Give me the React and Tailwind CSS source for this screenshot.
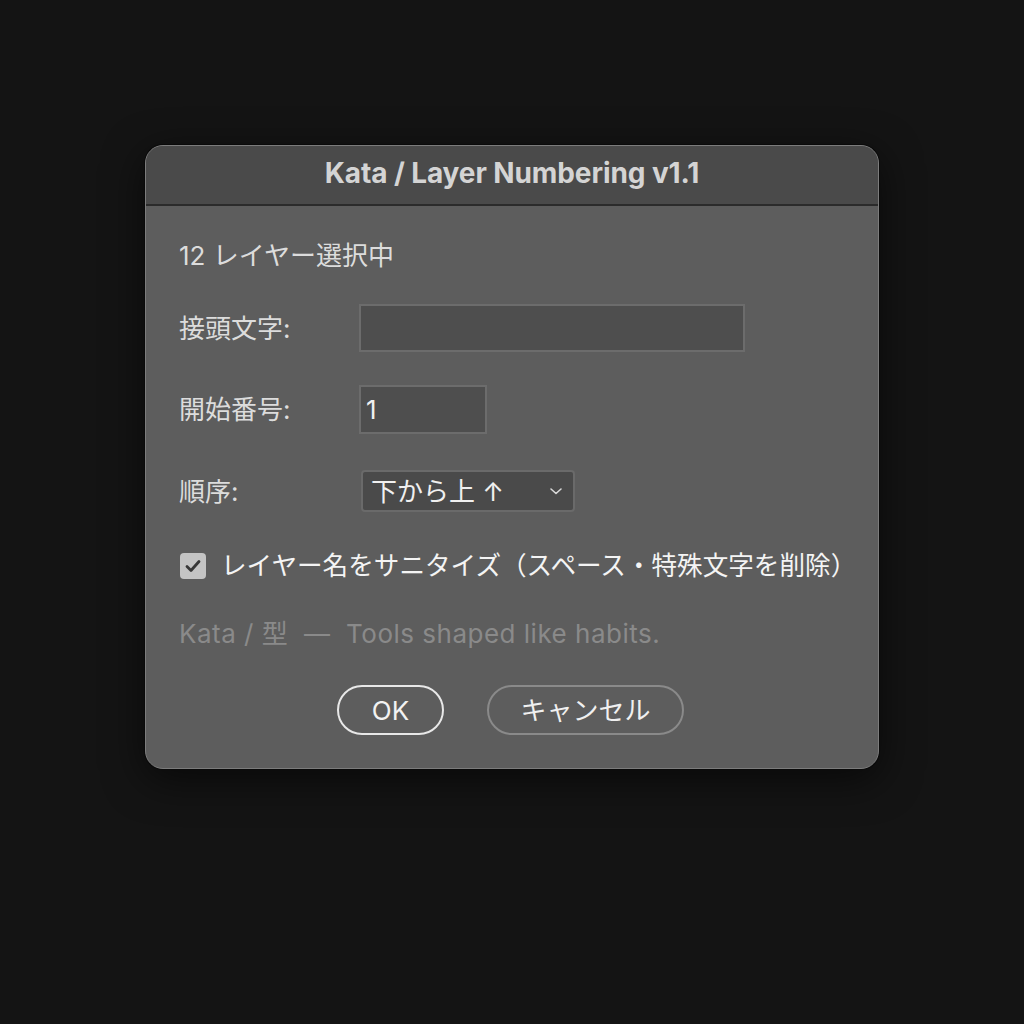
import React from "react";

const font = { fontFamily: '"Inter", "Noto Sans CJK JP", sans-serif' };

export default function App() {
  return (
    <div className="w-[1024px] h-[1024px] bg-[#141414] pt-[145px]" style={font}>
      <div className="mx-auto w-[734px] h-[624px] rounded-[18px] border border-[#7c7c7c] bg-[#5d5d5d] shadow-[0_0_0_1px_#0a0a0a,0_10px_40px_rgba(0,0,0,0.6)] overflow-hidden flex flex-col">
        <div className="h-[60px] shrink-0 bg-[#4a4a4a] border-b-2 border-[#2b2b2b] flex items-center justify-center pb-[5px]">
          <span className="text-[28px] font-bold text-[#d4d4d4] tracking-[-0.1px]">Kata / Layer Numbering v1.1</span>
        </div>
        <div className="flex flex-col pl-[33px] pr-[20px] pt-[34px] text-[26px] text-[#dcdcdc]">
          <div className="h-[30px] flex items-center">12 レイヤー選択中</div>

          <div className="mt-[34px] flex items-center h-[48px]">
            <div className="w-[180px]">接頭文字:</div>
            <div className="w-[386px] h-[48px] bg-[#4e4e4e] border-2 border-[#6c6c6c]" />
          </div>

          <div className="mt-[33px] flex items-center h-[49px]">
            <div className="w-[180px]">開始番号:</div>
            <div className="w-[128px] h-[49px] bg-[#4e4e4e] border-2 border-[#6c6c6c] flex items-center pl-[5px] text-[26px] text-[#f0f0f0]">1</div>
          </div>

          <div className="mt-[36px] flex items-center h-[42px]">
            <div className="w-[182px]">順序:</div>
            <div className="w-[214px] h-[42px] rounded-[4px] bg-[#4a4a4a] border-2 border-[#6a6a6a] flex items-center justify-between pl-[8px] pr-[10px] text-[#f0f0f0]">
              <span>下から上 ↑</span>
              <svg width="14" height="10" viewBox="0 0 14 10" fill="none">
                <path d="M2 3 L7 7.5 L12 3" stroke="#d8d8d8" strokeWidth="1.6" strokeLinecap="round" strokeLinejoin="round" />
              </svg>
            </div>
          </div>

          <div className="mt-[39px] flex items-center h-[30px] whitespace-nowrap">
            <div className="w-[26px] h-[26px] shrink-0 rounded-[4px] bg-[#c4c4c4] flex items-center justify-center ml-[1px]">
              <svg width="18" height="16" viewBox="0 0 18 16" fill="none">
                <path d="M3 8.5 L7 12.5 L15 3.5" stroke="#383838" strokeWidth="2.8" strokeLinecap="round" strokeLinejoin="round" />
              </svg>
            </div>
            <span className="ml-[15px] text-[25.6px] text-[#f4f4f4]">レイヤー名をサニタイズ（スペース・特殊文字を削除）</span>
          </div>

          <div className="mt-[37px] h-[30px] flex items-center text-[#8a8a8a] whitespace-pre tracking-[0.5px]">Kata / 型  —  Tools shaped like habits.</div>

          <div className="mt-[37px] flex justify-center gap-[43px] pr-[16px] h-[50px]">
            <button className="w-[107px] h-[50px] rounded-full border-2 border-[#e8e8e8] text-[#f2f2f2] text-[26px] flex items-center justify-center">OK</button>
            <button className="w-[197px] h-[50px] rounded-full border-2 border-[#8a8a8a] text-[#f0f0f0] text-[26px] flex items-center justify-center">キャンセル</button>
          </div>
        </div>
      </div>
    </div>
  );
}
